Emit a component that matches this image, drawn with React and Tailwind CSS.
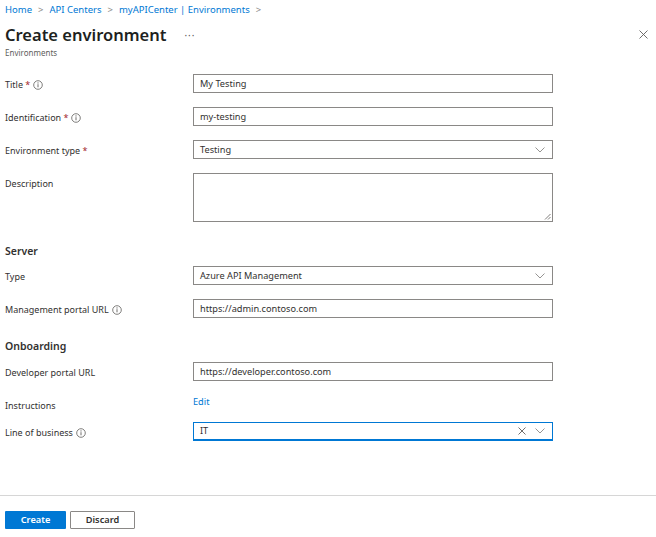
const Info = () => (
  <svg width="10" height="10" viewBox="0 0 10 10" className="inline-block ml-[3px] -mt-[1px] align-middle">
    <circle cx="5" cy="5" r="4.3" fill="none" stroke="#605e5c" strokeWidth="0.8" />
    <line x1="5" y1="4.2" x2="5" y2="7.3" stroke="#605e5c" strokeWidth="0.9" />
    <circle cx="5" cy="2.9" r="0.55" fill="#605e5c" />
  </svg>
);

const Chevron = () => (
  <svg width="10" height="6" viewBox="0 0 10 6">
    <path d="M0.5 0.5 L5 5 L9.5 0.5" fill="none" stroke="#8a8886" strokeWidth="0.9" />
  </svg>
);

const Label = ({ text, required, info }) => (
  <div className="w-[188px] shrink-0 pt-[5px] text-[9px] leading-[12px] text-[#323130]">
    {text}
    {required && <span className="text-[#a4262c]"> *</span>}
    {info && <Info />}
  </div>
);

const Input = ({ value }) => (
  <div className="w-[360px] h-[19px] border border-[#8a8886] px-[6px] flex items-center text-[9.2px] text-[#323130]">
    {value}
  </div>
);

const Select = ({ value }) => (
  <div className="w-[360px] h-[19px] border border-[#8a8886] pl-[6px] pr-[7px] flex items-center justify-between text-[9.2px] text-[#323130]">
    <span>{value}</span>
    <Chevron />
  </div>
);

const Row = ({ children, className = "" }) => (
  <div className={`flex items-start ${className}`}>{children}</div>
);

export default function App() {
  return (
    <div
      className="w-[656px] h-[537px] bg-white flex flex-col text-[#323130]"
      style={{ fontFamily: '"Noto Sans", "Open Sans", sans-serif' }}
    >
      {/* breadcrumb */}
      <div className="pl-[5px] pt-[3px] text-[9.5px] leading-[14px] text-[#0078d4] flex items-center gap-[6px]">
        <span>Home</span>
        <span className="text-[#8a8886]">&gt;</span>
        <span>API Centers</span>
        <span className="text-[#8a8886]">&gt;</span>
        <span>myAPICenter | Environments</span>
        <span className="text-[#8a8886]">&gt;</span>
      </div>

      {/* header */}
      <div className="flex items-start pl-[5px] pr-[8px] mt-[7px]">
        <div className="flex-1">
          <div className="flex items-center">
            <h1 className="text-[16.5px] leading-[22px] font-semibold text-[#201f1e]">Create environment</h1>
            <span className="ml-[18px] text-[10px] text-[#605e5c] tracking-[1px]">···</span>
          </div>
          <div className="text-[8px] leading-[12px] text-[#605e5c] mt-[1px]">Environments</div>
        </div>
        <svg width="9" height="9" viewBox="0 0 9 9" className="mt-[6px]">
          <path d="M0.5 0.5 L8.5 8.5 M8.5 0.5 L0.5 8.5" stroke="#605e5c" strokeWidth="0.9" />
        </svg>
      </div>

      {/* form */}
      <div className="pl-[5px] mt-[15px] flex flex-col">
        <Row>
          <Label text="Title" required info />
          <Input value="My Testing" />
        </Row>
        <Row className="mt-[14px]">
          <Label text="Identification" required info />
          <Input value="my-testing" />
        </Row>
        <Row className="mt-[14px]">
          <Label text="Environment type" required />
          <Select value="Testing" />
        </Row>
        <Row className="mt-[14px]">
          <Label text="Description" />
          <div className="relative w-[360px] h-[49px] border border-[#8a8886]">
            <svg width="7" height="7" viewBox="0 0 7 7" className="absolute right-[1px] bottom-[1px]">
              <path d="M1 6.5 L6.5 1 M4 6.5 L6.5 4" stroke="#605e5c" strokeWidth="0.8" />
            </svg>
          </div>
        </Row>

        <div className="mt-[22px] text-[10.5px] leading-[14px] font-semibold text-[#323130]">Server</div>
        <Row className="mt-[8px]">
          <Label text="Type" />
          <Select value="Azure API Management" />
        </Row>
        <Row className="mt-[14px]">
          <Label text="Management portal URL" info />
          <Input value="https://admin.contoso.com" />
        </Row>

        <div className="mt-[21px] text-[10.5px] leading-[14px] font-semibold text-[#323130]">Onboarding</div>
        <Row className="mt-[9px]">
          <Label text="Developer portal URL" />
          <Input value="https://developer.contoso.com" />
        </Row>
        <Row className="mt-[15px]">
          <div className="w-[188px] shrink-0 pt-[4px] text-[9px] leading-[12px]">Instructions</div>
          <div className="text-[9.2px] leading-[12px] text-[#0078d4]">Edit</div>
        </Row>
        <Row className="mt-[10px]">
          <Label text="Line of business" info />
          <div className="w-[360px] h-[19px] border border-[#0078d4] border-b-2 pl-[6px] pr-[7px] flex items-center justify-between text-[9.2px]">
            <span>IT</span>
            <div className="flex items-center gap-[9px]">
              <svg width="8" height="8" viewBox="0 0 8 8">
                <path d="M0.5 0.5 L7.5 7.5 M7.5 0.5 L0.5 7.5" stroke="#605e5c" strokeWidth="0.9" />
              </svg>
              <Chevron />
            </div>
          </div>
        </Row>
      </div>

      {/* footer */}
      <div className="mt-auto border-t border-[#d6d6d6] pl-[5px] pt-[15px] pb-[8px] flex gap-[4px]">
        <button className="w-[61px] h-[18px] bg-[#0078d4] rounded-[1px] text-white text-[9.2px] font-semibold leading-none">
          Create
        </button>
        <button className="w-[65px] h-[18px] border border-[#8a8886] rounded-[1px] text-[#323130] text-[9.2px] font-semibold leading-none">
          Discard
        </button>
      </div>
    </div>
  );
}
